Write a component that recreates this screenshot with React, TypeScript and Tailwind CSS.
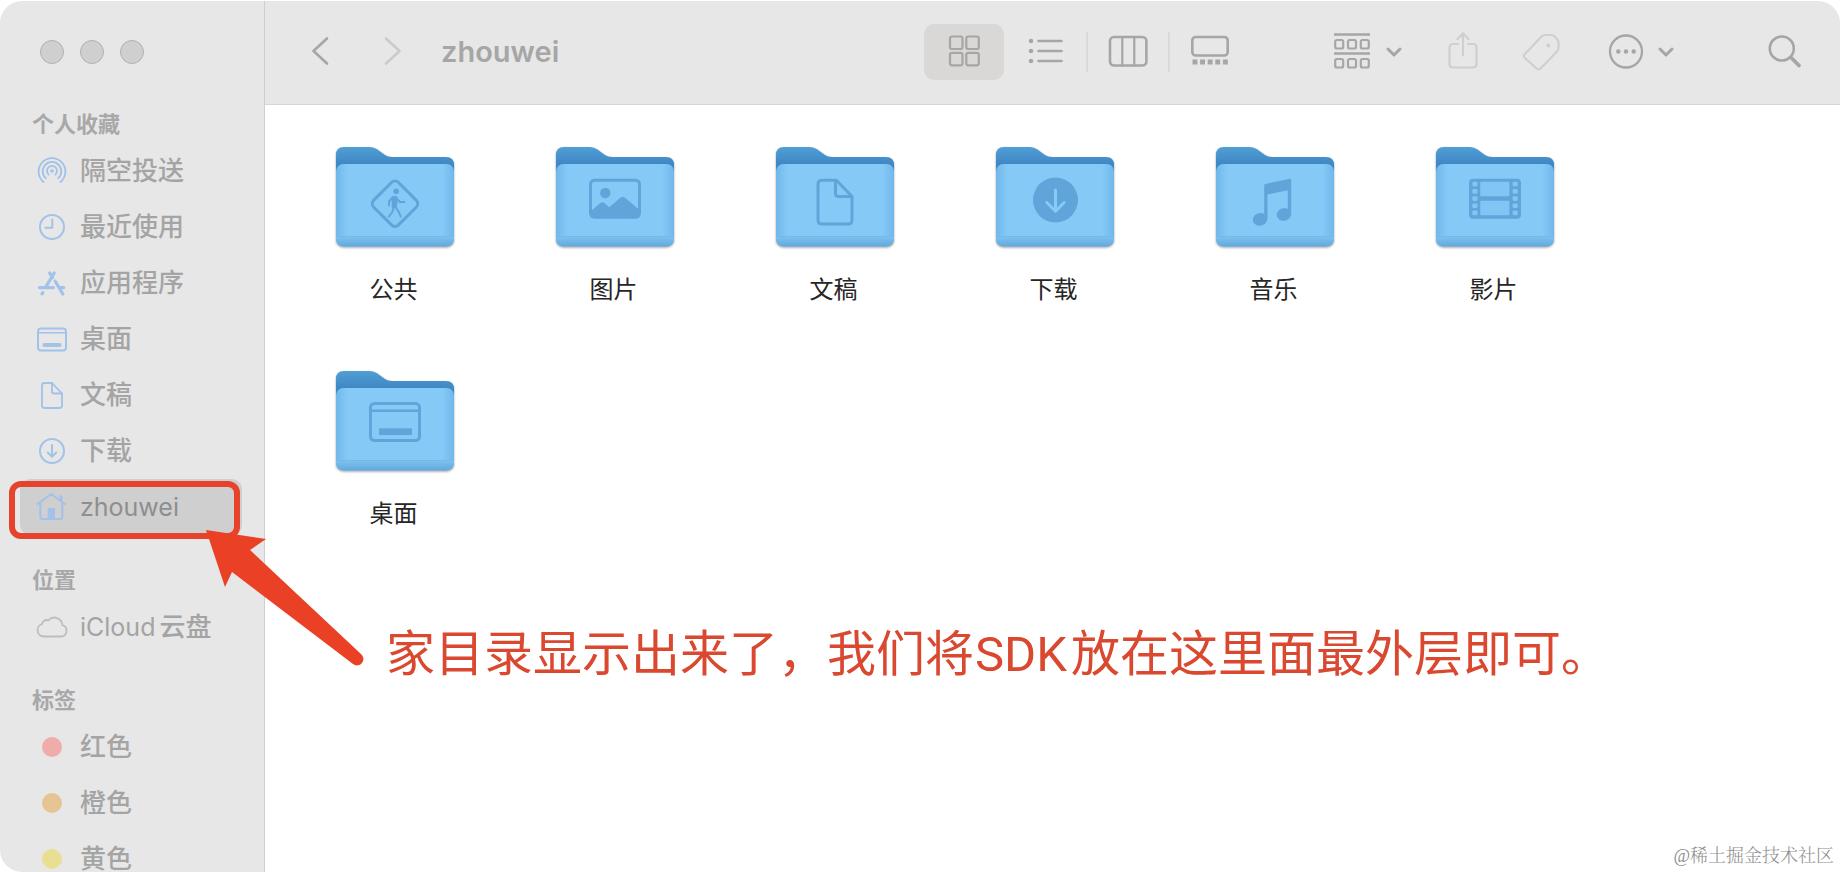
import type { ReactNode } from "react";

type Item = {
  latin?: string;
  label?: string;
  icon: ReactNode;
  active?: boolean;
};

const line = {
  fill: "none",
  stroke: "currentColor",
  strokeLinecap: "round" as const,
  strokeLinejoin: "round" as const,
};

/* Sidebar icons, all on a 32px box */
const SideIcon = ({ children, width = 2 }: { children: ReactNode; width?: number }) => (
  <svg viewBox="0 0 32 32" className="size-8 shrink-0" strokeWidth={width} aria-hidden="true" {...line}>
    {children}
  </svg>
);

const Dot = ({ color }: { color: string }) => (
  <span className="flex w-8 shrink-0 justify-center">
    <span className={`size-5 rounded-full ${color}`} />
  </span>
);

const favorites: Item[] = [
  {
    label: "隔空投送",
    icon: (
      <SideIcon width={1.8}>
        <circle cx="16" cy="16" r="1.8" fill="currentColor" stroke="none" />
        <path d="M12.6 19.6a5 5 0 1 1 6.8 0M9.8 23.2a9.300 9.300 0 1 1 12.400 0M7.600 27a13.400 13.400 0 1 1 16.800 0" />
      </SideIcon>
    ),
  },
  {
    label: "最近使用",
    icon: (
      <SideIcon>
        <circle cx="16" cy="16" r="12" />
        <path d="M16.300 8.500v8.200H9.500" />
      </SideIcon>
    ),
  },
  {
    label: "应用程序",
    icon: (
      <SideIcon width={3.2}>
        <path d="M13.600 6l3 4.600M19.200 14.200L26.800 27M18.200 6L9.400 20.600M3.400 20.600h14M24.600 20.600h3.200M6.800 25.600l-.8 1.200" />
      </SideIcon>
    ),
  },
  {
    label: "桌面",
    icon: (
      <SideIcon>
        <rect x="2" y="5.500" width="28" height="22" rx="3" />
        <path d="M2 9.800h28" strokeWidth="1.600" />
        <path d="M8.500 22h15" strokeWidth="4" />
      </SideIcon>
    ),
  },
  {
    label: "文稿",
    icon: (
      <SideIcon width={1.8}>
        <path d="M16 4H8.500q-2.500 0-2.500 2.500V26.500q0 2.500 2.500 2.500h15q2.500 0 2.500-2.500V14.500Z" />
        <path d="M16 4v8.500q0 2 2 2h8" />
      </SideIcon>
    ),
  },
  {
    label: "下载",
    icon: (
      <SideIcon>
        <circle cx="16" cy="16" r="12" />
        <path d="M16 10v11.500M11.700 17.500l4.300 4.200 4.300-4.200" />
      </SideIcon>
    ),
  },
  {
    latin: "zhouwei",
    active: true,
    icon: (
      <SideIcon>
        <path d="M1.500 13L15.200 3 29 13M4.300 12v14q0 2 2 2h18q2 0 2-2V12" />
        <path d="M25 5.500v4" strokeWidth="3" />
        <path d="M11.700 17h7.300v11h-7.300z" fill="currentColor" stroke="none" />
      </SideIcon>
    ),
  },
];

const locations: Item[] = [
  {
    latin: "iCloud",
    label: "云盘",
    icon: (
      <span className="text-[#bdbdbd]">
        <SideIcon width={1.8}>
          <path d="M7.500 25.500A6.300 6.300 0 0 1 6 13.200 4.800 4.800 0 0 1 12.400 9.300 8 8 0 0 1 26.400 14.200 5.800 5.800 0 0 1 25.500 25.500Z" />
        </SideIcon>
      </span>
    ),
  },
];

const tags: Item[] = [
  { label: "红色", icon: <Dot color="bg-[#efaca8]" /> },
  { label: "橙色", icon: <Dot color="bg-[#e6c594]" /> },
  { label: "黄色", icon: <Dot color="bg-[#e9df93]" /> },
];

/* Glyphs stamped on the folders, in the folder's own 118x100 space */
const folders: { label: string; glyph: ReactNode }[] = [
  {
    label: "公共",
    glyph: (
      <>
        <rect x="41.500" y="39.200" width="35" height="35" rx="5" transform="rotate(45 59 56.700)" />
        <g strokeWidth="2">
          <circle cx="60.200" cy="44.200" r="2.800" fill="currentColor" stroke="none" />
          <path d="M56.500 50.500q3-1.500 4.300.5l-.8 8.500-3.200 1z" fill="currentColor" />
          <path d="M56 51l-3 3.500v4M61 52l3 3h4.500M57.500 61.500l-1.500 4-3.200 4.200M59.500 60l3 4.500 2.300 5.200" />
        </g>
      </>
    ),
  },
  {
    label: "图片",
    glyph: (
      <>
        <rect x="34.500" y="33.200" width="49" height="37" rx="4" />
        <circle cx="49.300" cy="46" r="5.200" fill="currentColor" stroke="none" />
        <path
          d="M34.500 64.500l9.500-8.200q2.300-2 4.600 0l4.600 4 10.500-9q3-2.400 6 0l13.800 11.700V70q0 1-3 1H37q-2.500 0-2.500-2z"
          fill="currentColor"
          stroke="none"
        />
      </>
    ),
  },
  {
    label: "文稿",
    glyph: (
      <>
        <path d="M60.500 33.200H46q-4 0-4 4V73q0 4 4 4h26q4 0 4-4V49.500Z" />
        <path d="M59.500 34v12.500q0 3 3 3H75" />
      </>
    ),
  },
  {
    label: "下载",
    glyph: (
      <>
        <circle cx="59.500" cy="53" r="22.500" fill="currentColor" stroke="none" />
        <path d="M59.500 43v20.500M50.800 55.500l8.700 8.700 8.700-8.700" stroke="#86caf7" />
      </>
    ),
  },
  {
    label: "音乐",
    glyph: (
      <g fill="currentColor" stroke="none">
        <path d="M48.200 38.500q0-1.200 1.200-1.500l24.300-5.300q1.500-.2 1.500 1.200V67h-3.400V43.300L51.500 47.500V72h-3.300z" />
        <ellipse cx="44" cy="72.400" rx="7.300" ry="6.300" transform="rotate(-12 44 72.400)" />
        <ellipse cx="68" cy="67.500" rx="7.300" ry="6.300" transform="rotate(-12 68 67.500)" />
      </g>
    ),
  },
  {
    label: "影片",
    glyph: (
      <g fill="#80c5f3" stroke="none">
        <rect x="33" y="31.700" width="52" height="40" rx="4" fill="currentColor" />
        <rect x="44.200" y="34.700" width="29.200" height="14.600" rx="1" />
        <rect x="44.200" y="53.700" width="29.200" height="14.600" rx="1" />
        {[34.7, 42, 49.2, 56.4, 63.6].map((y) => (
          <g key={y}>
            <rect x="36.300" y={y} width="5.200" height="4.700" rx="1.400" />
            <rect x="76.600" y={y} width="5.200" height="4.700" rx="1.400" />
          </g>
        ))}
      </g>
    ),
  },
  {
    label: "桌面",
    glyph: (
      <>
        <rect x="34.500" y="32.500" width="49" height="37" rx="4" />
        <path d="M34.500 39.700h49" strokeWidth="2.500" />
        <rect x="43" y="57.300" width="33" height="6.700" fill="currentColor" stroke="none" />
      </>
    ),
  },
];

const FolderArt = ({ children }: { children: ReactNode }) => (
  <svg
    viewBox="0 0 118 104"
    className="h-[104px] w-[118px] overflow-visible text-[#5fa5d9] drop-shadow-[0_1px_1px_rgba(0,0,0,0.35)]"
    strokeWidth="3"
    aria-hidden="true"
    {...line}
  >
    <path
      d="M0 40V8Q0 0 8 0H34q4 0 7.500 2.500L49 8q3 2 7 2H110q8 0 8 8V40Z"
      fill="url(#folder-back)"
      stroke="none"
    />
    <path d="M0 26q0-9 8-9H110q8 0 8 9V91q0 8.500-8 8.500H8Q0 99.500 0 91Z" fill="#85c9f7" stroke="none" />
    <path d="M0 26q0-9 8-9H110q8 0 8 9V91q0 8.500-8 8.500H8Q0 99.500 0 91Z" fill="url(#folder-side)" stroke="none" />
    <path d="M0 90H118V91q0 8.500-8 8.500H8Q0 99.500 0 91Z" fill="url(#folder-base)" stroke="none" />
    <path d="M1 89.500H117" stroke="#74b8e6" strokeWidth="1" />
    {children}
  </svg>
);

const SidebarSection = ({ title, items }: { title: string; items: Item[] }) => (
  <section className="mb-[26px] shrink-0 last:mb-0">
    <h2 className="pl-8 text-[22px] leading-[38px] font-bold text-[#a8a8a8]">{title}</h2>
    <ul className="mr-[22px] ml-5">
      {items.map((item) => (
        <li key={title + item.latin + item.label} className="relative">
          <a
            href="#"
            className={`flex h-14 items-center gap-3 rounded-[10px] pl-4 leading-6 whitespace-nowrap ${
              item.active ? "bg-[#cfcfcf] text-[#8e8e8e]" : "text-[#a4a4a4]"
            }`}
          >
            <span className="text-[#a2c2e9]">{item.icon}</span>
            <span className="flex items-center gap-1">
              {item.latin && <span className="text-[25px] leading-6">{item.latin}</span>}
              {item.label && <span className="text-[26px] leading-6 font-medium">{item.label}</span>}
            </span>
          </a>
          {item.active && <Callout />}
        </li>
      ))}
    </ul>
  </section>
);

/* Red frame and arrow pointing at the home directory */
const Callout = () => (
  <div className="pointer-events-none absolute top-0.5 right-0.5 -bottom-1 -left-[11px] z-10 rounded-[12px] border-6 border-[#e5432b]">
    <svg
      viewBox="0 0 160 138"
      className="absolute top-[43px] left-[190px] h-[138px] w-[160px] max-w-none"
      fill="#ea4026"
      aria-hidden="true"
    >
      <path d="M1 0L61 9 45 20 156 124a6 6 0 0 1-8 10L27 42 20 57Z" />
    </svg>
  </div>
);

const tool = { ...line, "aria-hidden": true };

const ToolChevron = () => (
  <svg viewBox="0 0 16 12" className="h-3 w-4" strokeWidth="3" {...tool}>
    <path d="M2 3l6 6 6-6" />
  </svg>
);

const views = [
  {
    name: "图标",
    icon: (
      <>
        <rect x="6" y="4.500" width="12.500" height="12.500" rx="2" />
        <rect x="22.300" y="4.500" width="12.500" height="12.500" rx="2" />
        <rect x="6" y="20.800" width="12.500" height="12.500" rx="2" />
        <rect x="22.300" y="20.800" width="12.500" height="12.500" rx="2" />
      </>
    ),
  },
  {
    name: "列表",
    icon: (
      <>
        <path d="M12.500 9h23M12.500 19h23M12.500 29h23" strokeWidth="2.600" />
        <path d="M5 9h0M5 19h0M5 29h0" strokeWidth="4.500" />
      </>
    ),
  },
  {
    name: "分栏",
    icon: (
      <>
        <rect x="2" y="5" width="36.400" height="28.500" rx="4" strokeWidth="2.600" />
        <path d="M14.300 5V33.500M26.300 5V33.500" />
      </>
    ),
  },
  {
    name: "画廊",
    icon: (
      <>
        <rect x="2.300" y="5" width="35.400" height="18.500" rx="3.500" strokeWidth="2.600" />
        <path d="M2.500 30h35.500" strokeWidth="5" strokeLinecap="butt" strokeDasharray="4.900 2.700" />
      </>
    ),
  },
];

const Toolbar = () => (
  <header className="flex h-[104px] shrink-0 items-center border-b border-[#d6d6d6] bg-[#e7e7e7] pr-[38px] pb-0.5 pl-[45px] text-[#a6a6a6]">
    <button aria-label="后退">
      <svg viewBox="0 0 20 32" className="h-8 w-5" strokeWidth="2.600" {...tool}>
        <path d="M17 2.500L3.500 15 17 27.500" />
      </svg>
    </button>
    <button aria-label="前进" disabled className="ml-[53px] text-[#cbcbcb]">
      <svg viewBox="0 0 20 32" className="h-8 w-5" strokeWidth="2.600" {...tool}>
        <path d="M3 2.500L16.500 15 3 27.500" />
      </svg>
    </button>
    <h1 className="ml-[38px] flex-1 text-[29px] font-semibold">zhouwei</h1>

    <div className="flex items-center" role="group" aria-label="显示方式">
      {views.map((view, i) => (
        <div key={view.name} className="flex items-center">
          {i > 0 && <span className={`h-10 w-0.5 ${i > 1 ? "bg-[#d9d9d9]" : ""}`} />}
          <button
            aria-label={view.name}
            className={`flex h-14 w-20 items-center justify-center rounded-[10px] ${i === 0 ? "bg-[#d9d8d6]" : ""}`}
          >
            <svg viewBox="0 0 40 40" className="size-10" strokeWidth="2.200" {...tool}>
              {view.icon}
            </svg>
          </button>
        </div>
      ))}
    </div>

    <button aria-label="分组" className="ml-[84px] flex items-center gap-[15px]">
      <svg viewBox="0 0 37 38" className="h-[38px] w-[37px]" strokeWidth="2.200" {...tool}>
        <path d="M0 1.500h36M0 20.500h36" strokeWidth="2.600" strokeLinecap="butt" />
        {[1.2, 14, 26.8].map((x) => (
          <g key={x}>
            <rect x={x} y="7" width="8" height="8.500" rx="1.800" />
            <rect x={x} y="26" width="8" height="8.500" rx="1.800" />
          </g>
        ))}
      </svg>
      <ToolChevron />
    </button>
    <button aria-label="共享" disabled className="ml-[46px] text-[#cfcfcf]">
      <svg viewBox="0 0 30 40" className="h-10 w-[30px]" strokeWidth="2.200" {...tool}>
        <path d="M10 12H5q-3.500 0-3.500 3.500V32q0 3.500 3.500 3.500H25q3.500 0 3.500-3.500V15.500Q28.500 12 25 12H20" />
        <path d="M15 23.500V1.500M9.500 7L15 1.300 20.500 7" />
      </svg>
    </button>
    <button aria-label="标签" disabled className="ml-[44px] text-[#cfcfcf]">
      <svg viewBox="0 0 38 40" className="h-10 w-[38px]" strokeWidth="2.200" {...tool}>
        <path d="M2.500 22.500L19 5q2-2 4.500-2H29q2.500 0 4 1.800l2.200 2.700q1.300 1.500 1.300 3.500v5q0 2-1.500 3.500L19 36q-2.500 2.500-5 0L2.500 25.500q-1.500-1.500 0-3Z" />
        <path d="M26.300 13.500h0" strokeWidth="4" />
      </svg>
    </button>
    <button aria-label="更多" className="ml-12 flex items-center gap-[14px]">
      <svg viewBox="0 0 36 36" className="size-9" strokeWidth="2.300" {...tool}>
        <circle cx="18" cy="17.500" r="16" />
        <path d="M10.300 17.500h0M18 17.500h0M25.700 17.500h0" strokeWidth="4.500" />
      </svg>
      <ToolChevron />
    </button>
    <button aria-label="搜索" className="ml-[94px]">
      <svg viewBox="0 0 34 34" className="size-[34px]" strokeWidth="2.600" {...tool}>
        <circle cx="13.800" cy="13.500" r="12" />
        <path d="M23 22.500l8 8" strokeWidth="3.800" />
      </svg>
    </button>
  </header>
);

export default function App() {
  return (
    <div className="h-screen bg-white pt-px font-['Inter','Noto_Sans_CJK_SC',sans-serif]">
      {/* Shared folder paints */}
      <svg className="absolute size-0" aria-hidden="true">
        <defs>
          <linearGradient id="folder-back" x1="0" y1="0" x2="0" y2="1">
            <stop offset="0" stopColor="#519ed6" />
            <stop offset="0.45" stopColor="#3e86c3" />
          </linearGradient>
          <linearGradient id="folder-side">
            <stop offset="0" stopColor="#5fabe0" stopOpacity="0.55" />
            <stop offset="0.1" stopColor="#5fabe0" stopOpacity="0" />
            <stop offset="0.9" stopColor="#5fabe0" stopOpacity="0" />
            <stop offset="1" stopColor="#5fabe0" stopOpacity="0.55" />
          </linearGradient>
          <linearGradient id="folder-base" x1="0" y1="0" x2="0" y2="1">
            <stop offset="0" stopColor="#7cc1ef" />
            <stop offset="1" stopColor="#62a8da" />
          </linearGradient>
        </defs>
      </svg>

      <div className="relative flex h-full overflow-hidden rounded-[22px]">
        <aside className="flex w-[265px] shrink-0 flex-col border-r border-[#cfcfcf] bg-[#e7e7e7]">
          <div className="flex h-[104px] shrink-0 items-center gap-4 pb-0.5 pl-10">
            {["关闭", "最小化", "缩放"].map((name) => (
              <button
                key={name}
                aria-label={name}
                className="size-6 rounded-full border border-[#b0b0b0] bg-[#cfcfcf]"
              />
            ))}
          </div>
          <SidebarSection title="个人收藏" items={favorites} />
          <SidebarSection title="位置" items={locations} />
          <SidebarSection title="标签" items={tags} />
        </aside>

        <div className="flex min-w-0 flex-1 flex-col">
          <Toolbar />
          <main className="flex-1">
            <ul className="grid auto-rows-[224px] grid-cols-[repeat(auto-fill,220px)] pt-[42px] pr-10 pl-5">
              {folders.map((folder) => (
                <li key={folder.label}>
                  <button className="flex w-full flex-col items-center gap-[23px]">
                    <FolderArt>{folder.glyph}</FolderArt>
                    <span className="pr-[3px] text-2xl text-[#262626]">{folder.label}</span>
                  </button>
                </li>
              ))}
            </ul>
            <p className="mt-6 pl-[121px] font-['Roboto','Noto_Sans_CJK_SC',sans-serif] text-[49px] leading-[72px] whitespace-nowrap text-[#d9482f]">
              家目录显示出来了，我们将<span className="pr-1 pl-px">SDK</span>放在这里面最外层即可。
            </p>
          </main>
        </div>

        <small className="absolute right-1.5 bottom-0.5 font-['Liberation_Serif','Noto_Serif_CJK_SC','Noto_Sans_CJK_SC',serif] text-lg font-light text-[#8f8f8f]">
          @稀土掘金技术社区
        </small>
      </div>
    </div>
  );
}
